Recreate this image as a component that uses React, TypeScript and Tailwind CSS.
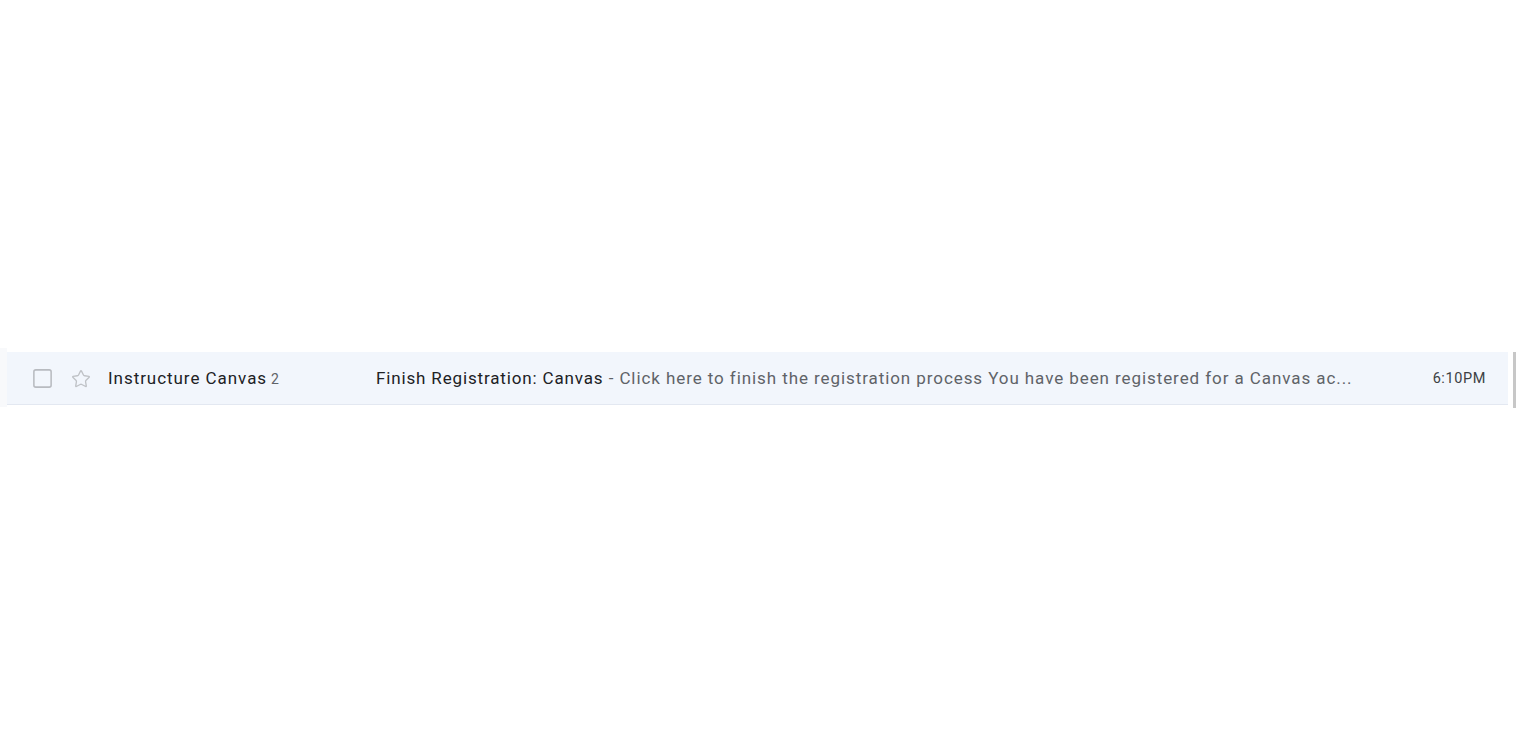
import { Square, Star } from "lucide-react";

const font = { fontFamily: "Roboto, 'Liberation Sans', Arial, sans-serif" };

const MailRow = () => {
  return (
    <div className="flex h-[53px] w-[1501px] items-center border-b border-[#e3e8f1] bg-[#f2f6fc] pt-[2px]">
      <div className="flex w-[101px] items-center pl-[24px]">
        <Square className="h-[23px] w-[23px] text-[#b8bbc0]" strokeWidth={1.6} />
        <Star className="ml-[17px] h-[20px] w-[20px] text-[#bfc2c6]" strokeWidth={1.6} />
      </div>
      <div className="flex w-[268px] items-baseline text-[17px] tracking-[0.95px] text-[#202124]">
        <span>Instructure Canvas</span>
        <span className="ml-[4px] text-[14px] tracking-normal text-[#5f6368]">2</span>
      </div>
      <div className="min-w-0 flex-1 whitespace-nowrap text-[17px] tracking-[0.85px] text-[#202124]">
        Finish Registration: Canvas
        <span className="tracking-[0.92px] text-[#5f6368]">
          {" "}- Click here to finish the registration process You have been registered for a Canvas ac...
        </span>
      </div>
      <div className="w-[150px] shrink-0 pr-[22px] text-right text-[14.5px] tracking-[0.6px] text-[#3c4043]">
        6:10PM
      </div>
    </div>
  );
};

export default function App() {
  return (
    <div className="flex h-[754px] w-full items-center bg-white pt-[5px]" style={font}>
      <div className="flex items-start">
        <div className="mt-[-4px] h-[59px] w-[7px] bg-[#f8f9fb]" />
        <MailRow />
        <div className="ml-[5px] h-[56px] w-[3px] bg-[#c7c7c7]" />
      </div>
    </div>
  );
}
